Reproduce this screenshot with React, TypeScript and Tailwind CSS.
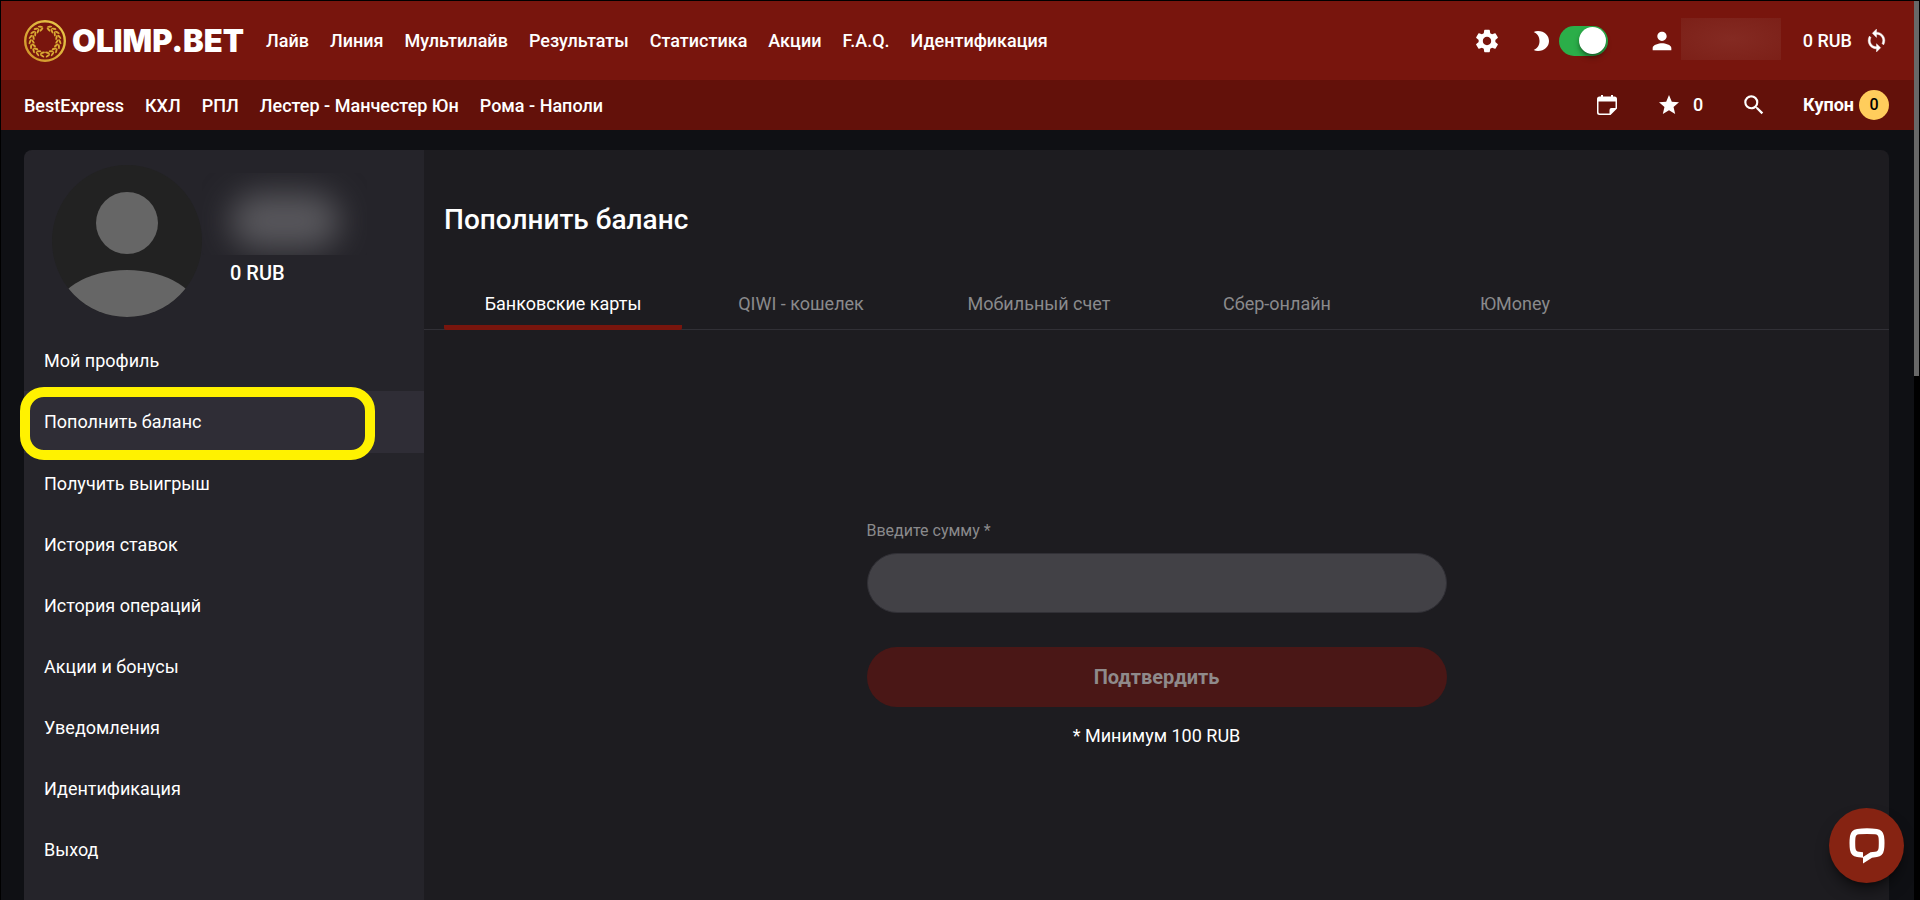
import React from "react";
import { MdPerson, MdSearch, MdSettings, MdStar } from "react-icons/md";

const mainLinks = [
  "Лайв",
  "Линия",
  "Мультилайв",
  "Результаты",
  "Статистика",
  "Акции",
  "F.A.Q.",
  "Идентификация",
];

const eventLinks = [
  "BestExpress",
  "КХЛ",
  "РПЛ",
  "Лестер - Манчестер Юн",
  "Рома - Наполи",
];

const profileLinks = [
  "Мой профиль",
  "Пополнить баланс",
  "Получить выигрыш",
  "История ставок",
  "История операций",
  "Акции и бонусы",
  "Уведомления",
  "Идентификация",
  "Выход",
];

const paymentTabs = [
  "Банковские карты",
  "QIWI - кошелек",
  "Мобильный счет",
  "Сбер-онлайн",
  "ЮMoney",
];

// angles of the leaf pairs on one branch of the wreath, bottom to top
const leafAngles = [188, 207, 226, 245, 264, 283, 302, 321, 339];

function WreathBranch(): React.JSX.Element {
  return (
    <g>
      {leafAngles.map(angle => (
        <g key={angle} transform={`rotate(${angle} 21 21) translate(21 7.500)`}>
          <ellipse cx="0" cy="-1.7" rx="2.6" ry="1" transform="rotate(28)" />
          <ellipse cx="0" cy="1.7" rx="2.6" ry="1" transform="rotate(-28)" />
        </g>
      ))}
    </g>
  );
}

function LogoMark(): React.JSX.Element {
  return (
    <svg viewBox="0 0 42 42" className="size-[42px] shrink-0" fill="#d9a933">
      <defs>
        <linearGradient id="gold" x1="0" y1="1" x2="1" y2="0">
          <stop offset="0" stopColor="#cf9128" />
          <stop offset="1" stopColor="#eacb4b" />
        </linearGradient>
      </defs>
      <circle
        cx="21"
        cy="21"
        r="19.8"
        fill="none"
        stroke="url(#gold)"
        strokeWidth="2.4"
      />
      <WreathBranch />
      <g transform="translate(42 0) scale(-1 1)">
        <WreathBranch />
      </g>
    </svg>
  );
}

function MoonIcon(): React.JSX.Element {
  return (
    <svg viewBox="0 0 16 20" className="h-5 w-4" fill="currentColor">
      <path d="M5 0 C11.500 0 16 4.500 16 10 C16 15.500 11.500 20 5 20 C3.500 20 2 19.700 0.700 19 C4.500 17.500 6.500 14 6.500 10 C6.500 6 4.500 2.500 0.700 1 C2 .3 3.500 0 5 0Z" />
    </svg>
  );
}

function RefreshIcon(): React.JSX.Element {
  return (
    <svg
      viewBox="0 0 24 24"
      className="size-[25px]"
      fill="currentColor"
      stroke="currentColor"
      strokeWidth="0.4"
      strokeLinejoin="round"
    >
      <path d="M12 4V1L8 5l4 4V6c3.310 0 6 2.690 6 6 0 1.010-.25 1.970-.7 2.800l1.460 1.460A7.930 7.930 0 0 0 20 12c0-4.420-3.580-8-8-8zm0 14c-3.310 0-6-2.690-6-6 0-1.010.25-1.970.7-2.800L5.240 7.740A7.930 7.930 0 0 0 4 12c0 4.420 3.580 8 8 8v3l4-4-4-4v3z" />
    </svg>
  );
}

function CalendarIcon(): React.JSX.Element {
  return (
    <svg viewBox="0 0 20 20" className="size-5" fill="currentColor">
      <path
        fillRule="evenodd"
        d="M4 0h2v1.500h8V0h2v1.500h1.500A2.500 2.500 0 0 1 20 4v9.500L13.500 20h-11A2.500 2.500 0 0 1 0 17.500V4a2.500 2.500 0 0 1 2.500-2.500H4ZM1.500 6.500V17a1.500 1.500 0 0 0 1.500 1.500h9.500V15a2 2 0 0 1 2-2h4V6.500Z"
      />
    </svg>
  );
}

function ChatIcon(): React.JSX.Element {
  return (
    <svg viewBox="0 0 36 36" className="size-9" fill="currentColor">
      <path
        fillRule="evenodd"
        d="M8 1 Q18 -0.500 28 1 Q34 2 35 8 Q36 15 35 22 Q34 28 28 29 L23 29.800 L14 35.500 V29.800 L8 29 Q2 28 1 22 Q0 15 1 8 Q2 2 8 1Z M10 6.300 Q18 5.500 26 6.300 Q29.300 6.600 29.600 10 Q30 15 29.600 20 Q29.300 23.500 26 23.800 L21.500 24.300 L14 29 V24.200 L10 23.800 Q6.700 23.500 6.400 20 Q6 15 6.400 10 Q6.700 6.600 10 6.300Z"
      />
    </svg>
  );
}

function Avatar(): React.JSX.Element {
  return (
    <svg viewBox="0 0 150 152" className="h-[152px] w-[150px] shrink-0">
      <defs>
        <clipPath id="avatar">
          <ellipse cx="75" cy="76" rx="75" ry="76" />
        </clipPath>
      </defs>
      <g clipPath="url(#avatar)">
        <rect width="150" height="152" fill="#222222" />
        <circle cx="75" cy="58" r="31" fill="#666666" />
        <ellipse cx="75" cy="151" rx="73" ry="46" fill="#666666" />
      </g>
    </svg>
  );
}

function Header(): React.JSX.Element {
  return (
    <header className="text-white">
      <div className="flex h-[79px] items-center justify-between bg-[#78150d] pl-[23px] pr-[25px]">
        <div className="flex items-center">
          <a href="#" className="flex items-center gap-[6px]">
            <LogoMark />
            <span className="font-[Inter,sans-serif] text-[31px] leading-none font-black">
              OLIMP.BET
            </span>
          </a>
          <nav className="ml-[22px] flex gap-[21px] text-lg font-medium">
            {mainLinks.map(link => (
              <a key={link} href="#">
                {link}
              </a>
            ))}
          </nav>
        </div>
        <div className="flex items-center">
          <button type="button" aria-label="Настройки">
            <MdSettings size={28} />
          </button>
          <label className="ml-8 flex cursor-pointer items-center gap-[10px]">
            <MoonIcon />
            <input
              type="checkbox"
              defaultChecked
              aria-label="Тёмная тема"
              className="peer sr-only"
            />
            <span className="flex h-[30px] w-[49px] items-center justify-end rounded-full bg-[#2bae49] pr-[2px]">
              <span className="size-[27px] rounded-full bg-white shadow-md shadow-black/40" />
            </span>
          </label>
          <a href="#" className="ml-10 flex items-center gap-[5px]">
            <MdPerson size={28} />
            <span className="mb-1 h-[42px] w-[100px] bg-radial from-[#842a22] to-[#7c2018]" />
          </a>
          <span className="ml-[22px] text-lg font-medium">0 RUB</span>
          <button type="button" aria-label="Обновить" className="ml-3">
            <RefreshIcon />
          </button>
        </div>
      </div>
      <div className="flex h-[50px] items-center justify-between bg-[#63110a] pl-[23px] pr-[25px]">
        <nav className="flex gap-[21px] pt-[2px] text-lg font-medium">
          {eventLinks.map(link => (
            <a key={link} href="#">
              {link}
            </a>
          ))}
        </nav>
        <div className="flex items-center text-lg font-medium">
          <button type="button" aria-label="Календарь">
            <CalendarIcon />
          </button>
          <a href="#" className="ml-10 flex items-center gap-3">
            <MdStar size={24} />
            <span>0</span>
          </a>
          <button type="button" aria-label="Поиск" className="ml-[38px]">
            <MdSearch size={26} />
          </button>
          <a href="#" className="ml-9 flex items-center gap-[5px]">
            <span className="font-bold">Купон</span>
            <span className="flex size-[30px] items-center justify-center rounded-full bg-[#ffcd5c] text-base text-black">
              0
            </span>
          </a>
        </div>
      </div>
    </header>
  );
}

function Sidebar(): React.JSX.Element {
  return (
    <aside className="w-[400px] shrink-0 rounded-tl-lg bg-[#25242a] pt-[15px]">
      <div className="flex pl-7">
        <Avatar />
        <div className="pt-2">
          <div className="h-[82px] w-[165px] overflow-hidden">
            <div className="mx-auto mt-5 h-14 w-[110px] rounded-full bg-[#58575c] blur-lg" />
          </div>
          <p className="pt-1 pl-7 text-xl font-medium text-white">0 RUB</p>
        </div>
      </div>
      <nav className="pt-[13px] text-lg text-white">
        {profileLinks.map((link, index) => (
          <a
            key={link}
            href="#"
            className={`relative flex items-center px-5 ${
              index === 1 ? "h-[62px] bg-[#2f2d36]" : "h-[61px]"
            }`}
          >
            {link}
            {index === 1 && (
              <span className="absolute -top-1 -bottom-[7px] -left-1 w-[355px] rounded-3xl border-10 border-[#fff200]" />
            )}
          </a>
        ))}
      </nav>
    </aside>
  );
}

function Deposit(): React.JSX.Element {
  return (
    <main className="grow rounded-tr-lg bg-[#1d1c20]">
      <h1 className="px-5 pt-[50px] text-[28px] leading-10 font-medium text-white">
        Пополнить баланс
      </h1>
      <div
        role="tablist"
        className="mt-10 flex border-b border-[#313036] px-5 text-lg"
      >
        {paymentTabs.map((tab, index) => (
          <button
            key={tab}
            type="button"
            role="tab"
            aria-selected={index === 0}
            className={`-mb-px h-[50px] w-[238px] border-b-5 pt-[2px] ${
              index === 0
                ? "rounded-xs border-[#78150d] text-white"
                : "border-transparent text-[#8a8a8c]"
            }`}
          >
            {tab}
          </button>
        ))}
      </div>
      <form className="mx-auto flex max-w-[580px] flex-col pt-[189px]">
        <label htmlFor="amount" className="text-base text-[#8a8a8c]">
          Введите сумму *
        </label>
        <input
          id="amount"
          type="text"
          className="mt-[10px] h-[60px] rounded-full border border-[#313036] bg-[#424146] px-6 text-lg text-white"
        />
        <button
          type="submit"
          className="mt-[34px] h-[60px] rounded-full bg-[#4a1716] text-xl font-bold text-[#8f8a8b]"
        >
          Подтвердить
        </button>
        <p className="mt-[15px] text-center text-lg text-white">
          * Минимум 100 RUB
        </p>
      </form>
    </main>
  );
}

export default function App(): React.JSX.Element {
  return (
    <div className="flex h-screen overflow-hidden border-t border-l border-black bg-[#0f1014] font-[Roboto,sans-serif]">
      <div className="flex min-w-0 grow flex-col">
        <Header />
        <div className="flex grow pt-5 pr-[25px] pl-[23px]">
          <Sidebar />
          <Deposit />
        </div>
      </div>
      <div className="w-[6px] shrink-0 bg-black">
        <div className="mr-px h-[375px] bg-[#686868]" />
      </div>
      <button
        type="button"
        aria-label="Чат"
        className="fixed right-4 bottom-[17px] flex size-[75px] items-center justify-center rounded-full bg-[#862312] text-white shadow-lg shadow-black/50"
      >
        <ChatIcon />
      </button>
    </div>
  );
}
